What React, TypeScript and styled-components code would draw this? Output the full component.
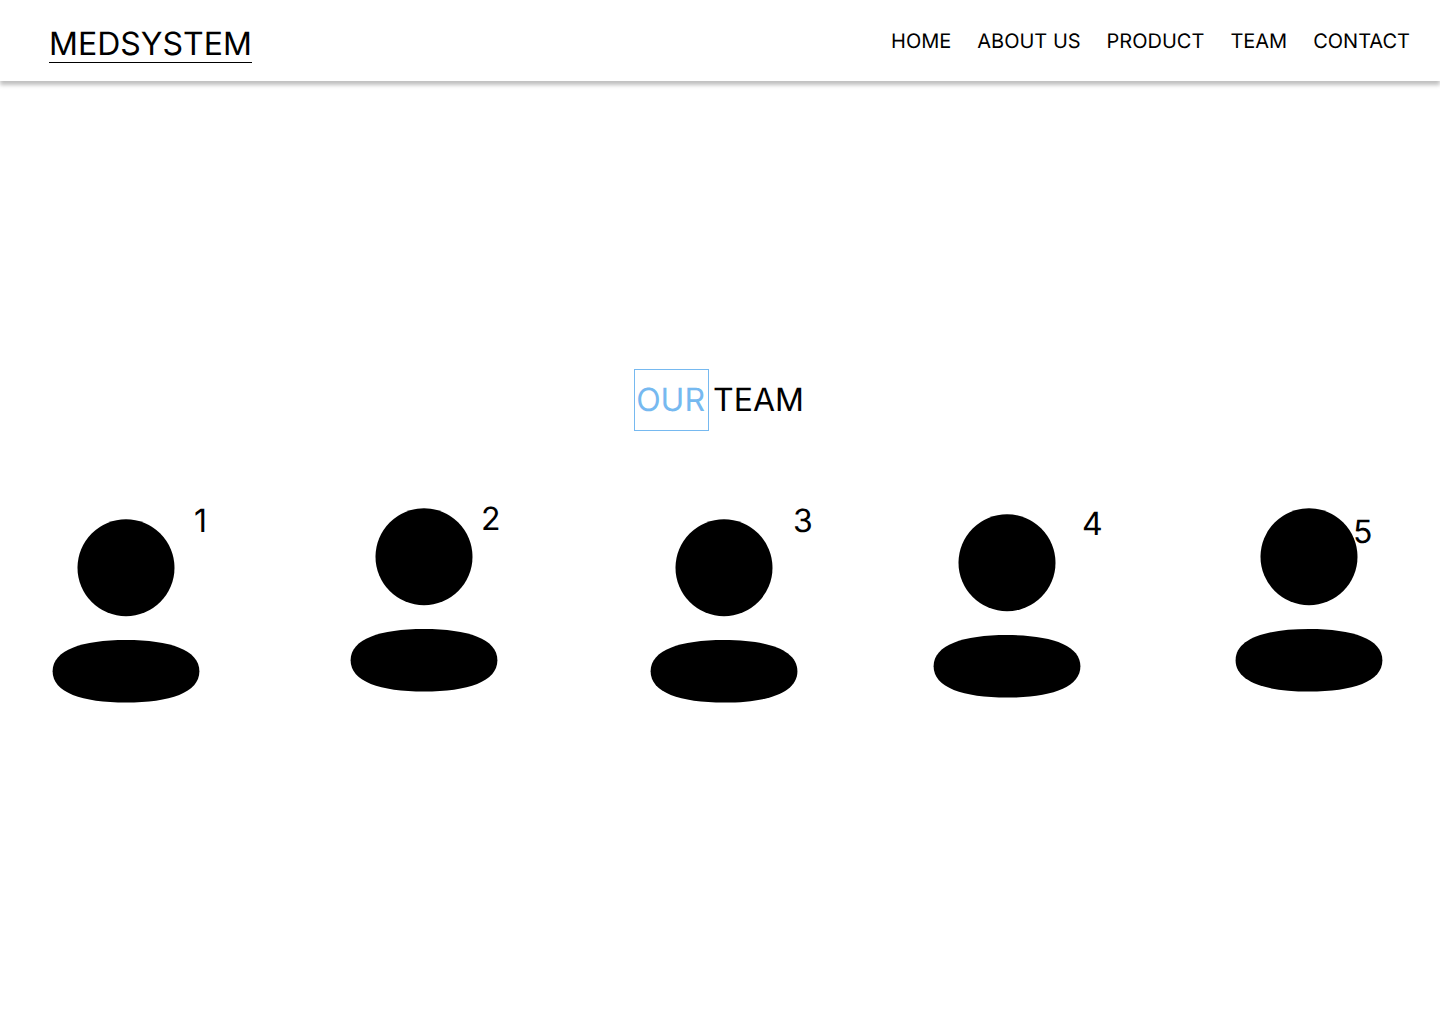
import React from "react";
import styled, { createGlobalStyle } from "styled-components";

const GlobalStyle = createGlobalStyle`
  *, *::before, *::after { box-sizing: border-box; }
  body {
    margin: 0;
    background: #ffffff;
    color: #000000;
    font-family: Inter, "Liberation Sans", sans-serif;
    font-weight: 400;
    text-rendering: geometricPrecision;
  }
`;

const Page = styled.div`
  display: flex;
  flex-direction: column;
  min-height: 100vh;
`;

const Header = styled.header`
  display: flex;
  align-items: flex-start;
  justify-content: space-between;
  padding: 24px 30px 18px 49px;
  background: #ffffff;
  box-shadow: 0 4px 4px rgba(0, 0, 0, 0.25);
`;

const Logo = styled.a`
  padding-top: 2px;
  border-bottom: 1px solid #000000;
  color: inherit;
  font-size: 32px;
  line-height: 36px;
  text-decoration: none;
`;

const NavList = styled.ul`
  display: flex;
  gap: 26px;
  margin: 0;
  padding: 5px 0 0;
  list-style: none;
`;

const NavLink = styled.a`
  color: inherit;
  font-size: 20px;
  line-height: 24px;
  text-decoration: none;
`;

const Main = styled.main`
  display: flex;
  flex-direction: column;
  padding-top: 288px;
`;

const Title = styled.h1`
  display: flex;
  align-items: center;
  justify-content: center;
  gap: 4px;
  margin: 0;
  padding-right: 2px;
  font-size: 32px;
  font-weight: 400;
  line-height: 60px;
`;

const Accent = styled.span`
  padding: 0 3px 0 1px;
  border: 1px solid #76b9f0;
  color: #76b9f0;
`;

const Team = styled.ul`
  display: grid;
  grid-template-columns: 298fr 300fr 283fr 302fr auto;
  margin: 0;
  padding: 77px 57px 0 53px;
  list-style: none;
`;

const Member = styled.li<{ $drop: number }>`
  padding-top: ${(p) => p.$drop}px;
`;

const Portrait = styled.div`
  position: relative;
  width: 147px;

  svg {
    display: block;
    overflow: visible;
  }
`;

const Badge = styled.span<{ $left: number; $top: number }>`
  position: absolute;
  left: ${(p) => p.$left}px;
  top: ${(p) => p.$top}px;
  font-size: 32px;
  line-height: 40px;
`;

const links = ["HOME", "ABOUT US", "PRODUCT", "TEAM", "CONTACT"];

const members = [
  { id: 1, drop: 11, left: 141, top: -18 },
  { id: 2, drop: 0, left: 130, top: -9 },
  { id: 3, drop: 11, left: 142, top: -18 },
  { id: 4, drop: 6, left: 148, top: -10 },
  { id: 5, drop: 0, left: 117, top: 4 },
];

function Person() {
  return (
    <svg width="147" height="184" viewBox="0 0 147 184" aria-hidden="true">
      <circle cx="73" cy="48.7" r="48.5" />
      <path d="M73 121C117 121 146.4 131 146.4 152.3C146.4 173.6 117 183.6 73 183.6C29 183.6 -0.4 173.6 -0.4 152.3C-0.4 131 29 121 73 121Z" />
    </svg>
  );
}

export default function App() {
  return (
    <Page>
      <GlobalStyle />
      <Header>
        <Logo href="#home">MEDSYSTEM</Logo>
        <nav>
          <NavList>
            {links.map((label) => (
              <li key={label}>
                <NavLink href={`#${label.toLowerCase().replace(" ", "-")}`}>{label}</NavLink>
              </li>
            ))}
          </NavList>
        </nav>
      </Header>
      <Main>
        <Title>
          <Accent>OUR</Accent>
          <span>TEAM</span>
        </Title>
        <Team>
          {members.map((m) => (
            <Member key={m.id} $drop={m.drop}>
              <Portrait>
                <Person />
                <Badge $left={m.left} $top={m.top}>
                  {m.id}
                </Badge>
              </Portrait>
            </Member>
          ))}
        </Team>
      </Main>
    </Page>
  );
}
